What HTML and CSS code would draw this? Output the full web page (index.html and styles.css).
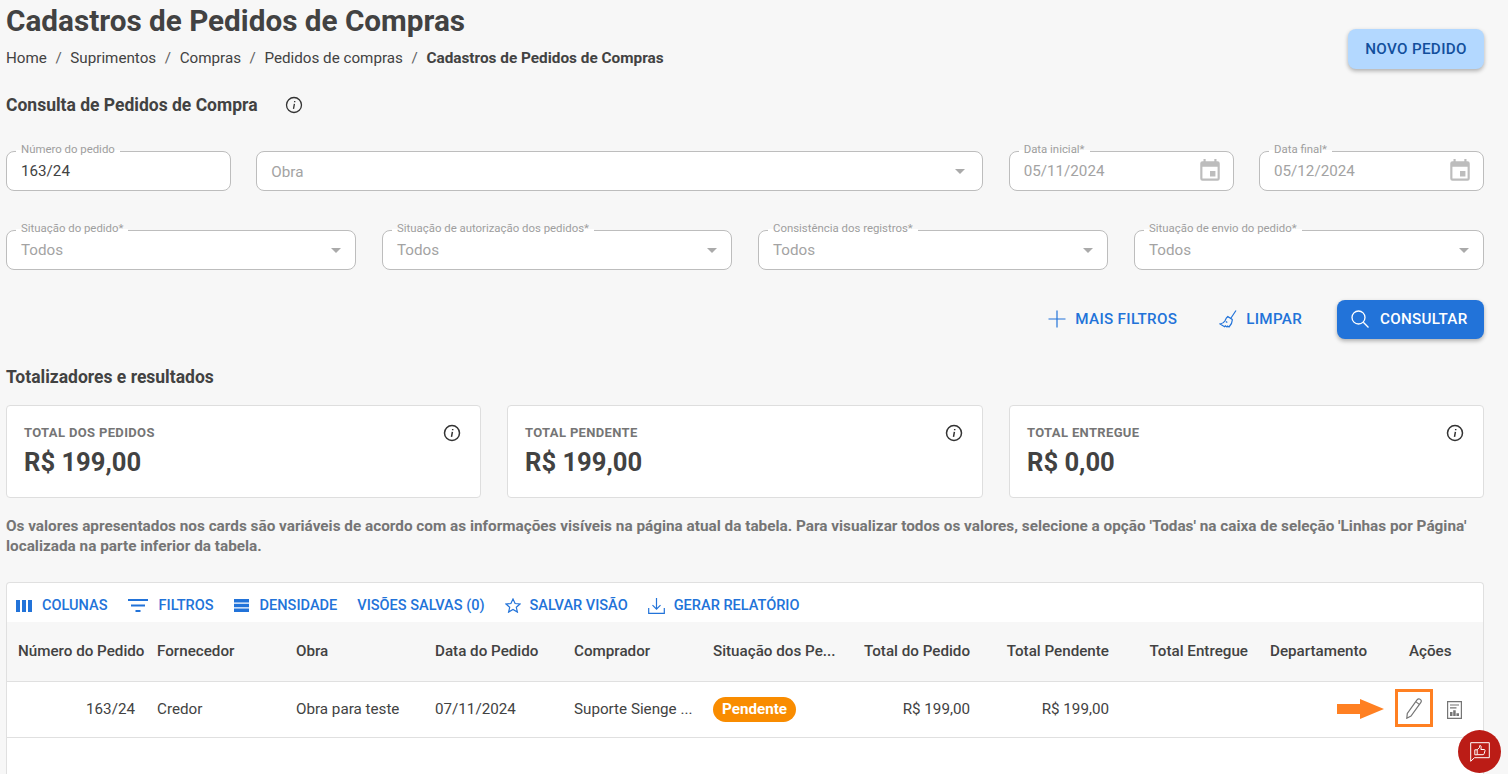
FILE: index.html
```html
<!DOCTYPE html>
<html>
<head>
    <title>Cadastros de Pedidos de Compras</title>
    <link rel="stylesheet" href="styles.css">
</head>
<body>
    <div class="page-head">
        <div>
            <h1>Cadastros de Pedidos de Compras</h1>
            <div class="crumbs">
                <span>Home</span><i>/</i><span>Suprimentos</span><i>/</i><span>Compras</span><i>/</i><span>Pedidos de compras</span><i>/</i><b>Cadastros de Pedidos de Compras</b>
            </div>
        </div>
        <button class="btn-new">NOVO PEDIDO</button>
    </div>

    <div class="section-title first">
        <h2>Consulta de Pedidos de Compra</h2>
        <svg class="info" viewBox="0 0 18 18"><circle cx="9" cy="9" r="7.500"/><path d="M9.700 5v1.300M9.400 7.800 8.500 12.800"/></svg>
    </div>

    <div class="fields row-one">
        <div class="field"><label>Número do pedido</label><span class="value">163/24</span></div>
        <div class="field"><span class="value muted low">Obra</span><span class="caret wide"></span></div>
        <div class="field">
            <label>Data inicial*</label><span class="value muted">05/11/2024</span>
            <svg class="cal" viewBox="0 0 24 24"><path d="M17 12h-5v5h5v-5zM16 1v2H8V1H6v2H5a2 2 0 0 0-2 2v14a2 2 0 0 0 2 2h14a2 2 0 0 0 2-2V5a2 2 0 0 0-2-2h-1V1h-2zm3 18H5V8h14v11z"/></svg>
        </div>
        <div class="field">
            <label>Data final*</label><span class="value muted">05/12/2024</span>
            <svg class="cal" viewBox="0 0 24 24"><path d="M17 12h-5v5h5v-5zM16 1v2H8V1H6v2H5a2 2 0 0 0-2 2v14a2 2 0 0 0 2 2h14a2 2 0 0 0 2-2V5a2 2 0 0 0-2-2h-1V1h-2zm3 18H5V8h14v11z"/></svg>
        </div>
    </div>

    <div class="fields row-two">
        <div class="field"><label>Situação do pedido*</label><span class="value muted">Todos</span><span class="caret"></span></div>
        <div class="field"><label>Situação de autorização dos pedidos*</label><span class="value muted">Todos</span><span class="caret"></span></div>
        <div class="field"><label>Consistência dos registros*</label><span class="value muted">Todos</span><span class="caret"></span></div>
        <div class="field"><label>Situação de envio do pedido*</label><span class="value muted">Todos</span><span class="caret"></span></div>
    </div>

    <div class="actions-bar">
        <button class="btn-text more">
            <svg viewBox="0 0 18 18"><path d="M9 .5v17M.5 9h17"/></svg>MAIS FILTROS
        </button>
        <button class="btn-text">
            <svg viewBox="0 0 18 18"><path d="M17 .5 12 8M8.800 6.500l4.400 2.900c.3 2.700-1 5.400-3.200 7.600l-1.400-1-.6 1-1.700-1.100-.7.900L1 14c2.300-.4 4-1.400 5-3.300.6-1.500 1.400-3.100 2.800-4.200zM6.800 11.600l1.500 1"/></svg>LIMPAR
        </button>
        <button class="btn-search">
            <svg viewBox="0 0 18 18"><circle cx="7.500" cy="7.500" r="6.500"/><path d="m12.300 12.300 5.200 5.200"/></svg>CONSULTAR
        </button>
    </div>

    <div class="section-title totals"><h2>Totalizadores e resultados</h2></div>

    <div class="cards">
        <div class="card">
            <div class="card-label">TOTAL DOS PEDIDOS</div>
            <div class="card-value">R$ 199,00</div>
            <svg class="info" viewBox="0 0 18 18"><circle cx="9" cy="9" r="7.500"/><path d="M9.700 5v1.300M9.400 7.800 8.500 12.800"/></svg>
        </div>
        <div class="card">
            <div class="card-label">TOTAL PENDENTE</div>
            <div class="card-value">R$ 199,00</div>
            <svg class="info" viewBox="0 0 18 18"><circle cx="9" cy="9" r="7.500"/><path d="M9.700 5v1.300M9.400 7.800 8.500 12.800"/></svg>
        </div>
        <div class="card">
            <div class="card-label">TOTAL ENTREGUE</div>
            <div class="card-value">R$ 0,00</div>
            <svg class="info" viewBox="0 0 18 18"><circle cx="9" cy="9" r="7.500"/><path d="M9.700 5v1.300M9.400 7.800 8.500 12.800"/></svg>
        </div>
    </div>

    <p class="note">Os valores apresentados nos cards são variáveis de acordo com as informações visíveis na página atual da tabela. Para visualizar todos os valores, selecione a opção 'Todas' na caixa de seleção 'Linhas por Página' localizada na parte inferior da tabela.</p>

    <div class="table">
        <div class="toolbar">
            <span class="tool"><svg class="solid ic-col" viewBox="0 0 16 12"><path d="M0 0h4v12H0zM6 0h4v12H6zM12 0h4v12h-4z"/></svg>COLUNAS</span>
            <span class="tool"><svg class="solid ic-filter" viewBox="0 0 20 13"><path d="M0 0h20v2H0zM3 5.500h14v2H3zM7.500 11h5v2h-5z"/></svg>FILTROS</span>
            <span class="tool"><svg class="solid ic-dens" viewBox="0 0 15 13"><path d="M0 0h15v3.400H0zM0 4.800h15v3.400H0zM0 9.600h15V13H0z"/></svg>DENSIDADE</span>
            <span class="tool">VISÕES SALVAS (0)</span>
            <span class="tool"><svg class="line ic-star" viewBox="0 0 16 15"><path d="m8 1 2.100 4.500 4.900.5-3.700 3.300 1.100 4.800L8 11.500l-4.400 2.600 1.100-4.800L1 6l4.900-.5z"/></svg>SALVAR VISÃO</span>
            <span class="tool"><svg class="line ic-down" viewBox="0 0 17 16"><path d="M8.500 0v11M4.500 7.200l4 4 4-4M.7 10v5.300h15.600V10"/></svg>GERAR RELATÓRIO</span>
        </div>
        <div class="grid-row grid-head">
            <div class="first-col">Número do Pedido</div>
            <div>Fornecedor</div>
            <div>Obra</div>
            <div>Data do Pedido</div>
            <div>Comprador</div>
            <div>Situação dos Pe...</div>
            <div class="right">Total do Pedido</div>
            <div class="right">Total Pendente</div>
            <div class="right">Total Entregue</div>
            <div class="dep">Departamento</div>
            <div class="last-col">Ações</div>
        </div>
        <div class="grid-row grid-body">
            <div class="right num">163/24</div>
            <div>Credor</div>
            <div>Obra para teste</div>
            <div>07/11/2024</div>
            <div>Suporte Sienge ...</div>
            <div class="chip-cell"><span class="chip">Pendente</span></div>
            <div class="right">R$ 199,00</div>
            <div class="right">R$ 199,00</div>
            <div></div>
            <div></div>
            <div class="row-actions">
                <svg class="arrow" viewBox="0 0 47 20"><path d="M0 5h23V0l24 10-24 10v-5H0z"/></svg>
                <span class="edit-box">
                    <svg viewBox="0 0 16 21"><path d="M11 1.800c.9-1.100 2.300-1.200 3.300-.4s1.200 2.200.4 3.300L5 18l-4.200 2.200.5-4.800zM9.700 3.600l3.600 2.800"/></svg>
                </span>
                <svg class="report" viewBox="0 0 15 18"><path d="M.6.6h13.800v16.800H.6z"/><path d="M3 4h9M3 6.800h6.500"/><path class="bars" d="M3 15v-4h2.500v4zM6.200 15V9.300h2.500V15zM9.400 15v-2.800H12V15z"/></svg>
            </div>
        </div>
    </div>

    <button class="feedback">
        <svg viewBox="0 0 20 20"><path d="M.7.700h18.600v15H4.500L.7 19.300z"/><path d="M4.800 7.800h2.400v5H4.800zM7.200 7.800l2.300-2.400.3-2c1.400 0 1.600 1.500 1.100 4.100h3.300c.8 0 1 .7.800 1.300l-.9 3c-.2.600-.5.900-1 .9H7.200"/></svg>
    </button>
</body>
</html>
```

FILE: styles.css
```css
* { box-sizing: border-box; }
html, body { height: 774px; overflow: hidden; }
body { margin: 0; padding: 0 24px 0 6px; background: #f7f7f7; color: #424242; font-family: Roboto, "Liberation Sans", sans-serif; font-size: 15.200px; }
button { font-family: inherit; border: 0; cursor: pointer; }

.page-head { display: flex; justify-content: space-between; align-items: flex-start; height: 87px; }
h1 { margin: 5px 0 0; font-size: 29.700px; line-height: 32px; font-weight: 700; color: #424242; }
.crumbs { display: flex; margin-top: 12px; font-size: 15.200px; line-height: 18px; color: #424242; }
.crumbs i { font-style: normal; margin: 0 8.600px; color: #616161; }
.crumbs b { font-size: 15.350px; font-weight: 700; }
.btn-new { margin-top: 29px; width: 136px; height: 40px; border-radius: 8px; background: #b3d8ff; color: #124f9c; font-size: 15.200px; font-weight: 500; letter-spacing: .35px; box-shadow: 0 2px 4px rgba(0,0,0,.3); }

.section-title { display: flex; align-items: center; }
h2 { margin: 0; font-size: 17.500px; line-height: 22px; font-weight: 700; color: #424242; }
.section-title.first { gap: 27px; height: 22px; margin-top: 7px; }
.section-title .info { width: 18px; height: 18px; }
.info { fill: none; stroke: #333; stroke-width: 1.300; }

.fields { display: grid; }
.row-one { grid-template-columns: 225px 727px 225px 225px; column-gap: 25.330px; margin-top: 35px; }
.row-two { grid-template-columns: repeat(4, 350px); column-gap: 26px; margin-top: 39px; }
.field { position: relative; display: flex; align-items: center; height: 40px; padding: 0 14px; background: #fff; border: 1px solid #bdbdbd; border-radius: 8px; }
.field label { position: absolute; left: 9px; top: -10px; padding: 0 5px; font-size: 11.400px; line-height: 14px; color: #9e9e9e; background: linear-gradient(#f7f7f7 57%, #fff 57%); }
.value { font-size: 15.200px; color: #424242; }
.value.muted { color: #a3a3a3; }
.value.low { padding-top: 2px; }
.caret { position: absolute; right: 14px; top: 17px; border-left: 5.500px solid transparent; border-right: 5.500px solid transparent; border-top: 5.500px solid #aaa; }
.caret.wide { right: 17px; }
.cal { position: absolute; right: 10px; top: 6px; width: 26px; height: 26px; fill: #bdbdbd; }

.actions-bar { display: flex; justify-content: flex-end; align-items: center; margin-top: 30px; height: 39px; }
.btn-text { display: flex; align-items: center; background: none; color: #2273d9; font-size: 15.200px; font-weight: 500; letter-spacing: .3px; padding: 0 0 2px; margin-right: 35px; }
.btn-text.more { margin-right: 42px; }
.btn-text svg { width: 18px; height: 18px; margin-right: 9px; fill: none; stroke: #2273d9; stroke-width: 1.200; }
.btn-search { display: flex; align-items: center; width: 147px; height: 39px; padding: 0 0 2px 14px; border-radius: 8px; background: #2273d9; color: #fff; font-size: 15.200px; font-weight: 500; letter-spacing: .3px; box-shadow: 0 2px 4px rgba(0,0,0,.3); }
.btn-search svg { width: 18px; height: 18px; margin-right: 11px; fill: none; stroke: #fff; stroke-width: 1.300; }

.section-title.totals { margin-top: 27px; }

.cards { display: grid; grid-template-columns: 475px 476px 475px; column-gap: 26px; margin-top: 17px; }
.card { position: relative; height: 93px; padding: 20px 17px; background: #fff; border: 1px solid #dedede; border-radius: 4px; }
.card-label { font-size: 13px; line-height: 14px; font-weight: 700; color: #757575; letter-spacing: .35px; }
.card-value { margin-top: 6px; font-size: 25.600px; line-height: 32px; font-weight: 700; color: #424242; }
.card .info { position: absolute; right: 19px; top: 18px; width: 18px; height: 18px; stroke-width: 1.500; }

.note { margin: 18px 0 0; font-size: 15.320px; line-height: 20px; font-weight: 700; color: #757575; }

.table { margin-top: 26px; height: 192px; background: #fff; border: 1px solid #e0e0e0; border-bottom: 0; border-radius: 4px 4px 0 0; }
.toolbar { display: flex; align-items: center; gap: 20px; height: 39px; padding: 6px 0 0 9px; }
.tool { display: flex; align-items: center; color: #2273d9; font-size: 14.550px; font-weight: 500; }
.tool .solid { fill: #2273d9; }
.tool .line { fill: none; stroke: #2273d9; stroke-width: 1.200; }
.ic-col { width: 16px; height: 12px; margin-right: 10px; }
.ic-filter { width: 20px; height: 13px; margin-right: 11px; }
.ic-dens { width: 15px; height: 13px; margin-right: 11px; }
.ic-star { width: 16px; height: 15px; margin-right: 9px; }
.ic-down { width: 17px; height: 16px; margin-right: 9px; }

.grid-row { display: grid; grid-template-columns: 140px repeat(5, 139px) 138px 139px 139px 140px 1fr; align-items: center; }
.grid-row > div { padding: 0 10px 2px; white-space: nowrap; }
.grid-head { height: 60px; background: #f7f7f7; border-bottom: 1px solid #e0e0e0; font-size: 15.200px; font-weight: 500; color: #424242; }
.grid-body { height: 56px; border-bottom: 1px solid #e0e0e0; font-size: 15.200px; color: #424242; }
.grid-row > .first-col { padding-left: 11px; padding-right: 0; }
.grid-row > .num { padding-right: 12px; }
.grid-row > .dep { padding-left: 12px; }
.grid-row > .last-col { padding-left: 11px; }
.grid-row > .chip-cell { padding-bottom: 0; }
.right { text-align: right; }
.chip { display: inline-block; height: 25px; padding: 0 9px; border-radius: 13px; background: #f98c00; color: #fff; font-size: 15.200px; line-height: 25px; font-weight: 700; }

.row-actions { position: relative; height: 100%; }
.arrow { position: absolute; left: -61px; top: 17px; width: 47px; height: 20px; fill: #ff8022; }
.edit-box { position: absolute; left: -3px; top: 7px; display: flex; align-items: center; justify-content: center; width: 38px; height: 38px; border: 3px solid #ff8022; }
.edit-box svg { width: 16px; height: 21px; fill: none; stroke: #757575; stroke-width: 1.200; }
.report { position: absolute; left: 49px; top: 19px; width: 15px; height: 18px; fill: none; stroke: #757575; stroke-width: 1.200; }
.report .bars { fill: #757575; stroke: none; }

.feedback { position: fixed; left: 1458px; top: 730px; width: 43px; height: 43px; padding: 0; display: flex; align-items: center; justify-content: center; border-radius: 50%; background: #bb1c16; }
.feedback svg { width: 20px; height: 20px; fill: none; stroke: #fff; stroke-width: 1; }
```
